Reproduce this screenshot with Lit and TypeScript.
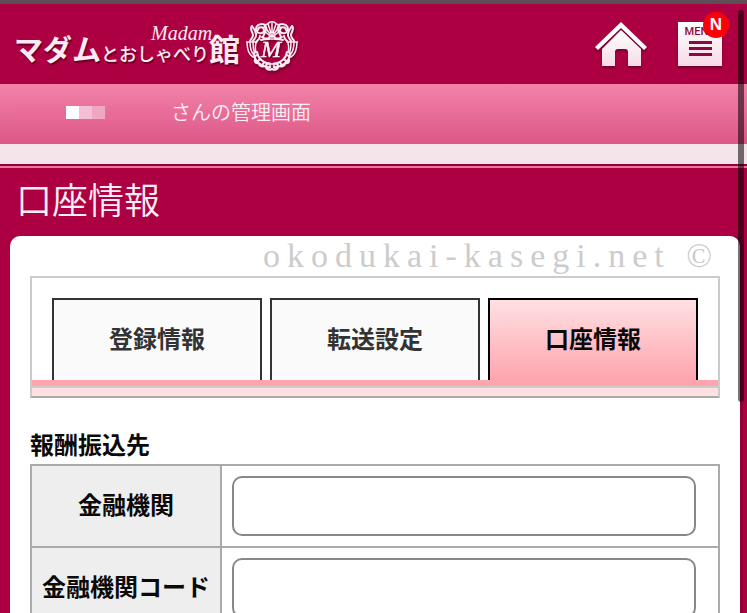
import { LitElement, html, css, svg } from "lit";
import { customElement, state } from "lit/decorators.js";
import { classMap } from "lit/directives/class-map.js";

@customElement("site-emblem")
class SiteEmblem extends LitElement {
  static styles = css`
    :host { display: block; }
    svg { display: block; filter: drop-shadow(1px 2px 1px rgba(60, 0, 20, 0.5)); }
    .letter { font: italic 24px "Liberation Serif", serif; }
  `;

  private half() {
    return svg`
      <path stroke-width="2" d="M12 9a3 3 0 1 1 4 3c-3 1-6-1-6-4s3-5 6-5 5 3 4 6-2 4-3 7"/>
      <path stroke-width="2" d="M6 5c-3 3 1 6 1 9s-2 4-3 6M10 12c1 4-1 5-3 8M14 15c0 3-2 4-4 6M6 5c2 3 4 5 4 8"/>
      <path stroke-width="2" d="M16 16c2 2 4 2 7 1M15 19c3-1 5-1 8-1"/>
      <path d="M1 21c0 7 1 12 6 15M4 21c0 6 1 10 4 13M7 21c0 5 0 8 2 11M10 22c-1 4-1 6 0 9M0 21h11"/>
      <path stroke-width="2" d="M8 32c0 7 6 13 14 14M11 31c1 6 5 10 12 12M9 38c-1 3 1 5 4 4M13 43c0 2 3 3 5 2M11 34l-3 2M14 38l-3 3M18 41l-2 4"/>
      <path stroke-width="2" d="M25 43c-4-2-6 1-4 3s4 0 3-1M20 47c2 3 4 2 6 1"/>`;
  }

  render() {
    return html`<svg width="52" height="52" viewBox="0 0 52 52" aria-hidden="true">
      <g fill="none" stroke="#fdeaf2" stroke-width="1.5" stroke-linecap="round">
        ${this.half()}
        <g transform="translate(52 0) scale(-1 1)">${this.half()}</g>
        <path d="M26 12V2M25 12l-3-9M27 12l3-9M24 13l-5-7M28 13l5-7M23 14l-5-4M29 14l5-4"/>
        <path d="M18 7c0-3 2-4 4-4 1-3 7-3 8 0 2 0 4 1 4 4"/>
        <path fill="#fdeaf2" d="M23 16c1-3 5-3 6 0zM23 18h6"/>
      </g>
      <text class="letter" x="25" y="36" text-anchor="middle" fill="#fff2f7" stroke="#fff2f7" stroke-width="0.5">M</text>
    </svg>`;
  }
}

@customElement("app-root")
class AppRoot extends LitElement {
  static styles = css`
    :host {
      display: block;
      position: relative;
      min-height: 100vh;
      box-sizing: border-box;
      background: #ac0042;
      border-top: 4px solid #5f4d55;
      color: #0a0a0a;
      font-family: "Noto Sans CJK JP", sans-serif;
    }
    * { box-sizing: border-box; }
    header {
      display: flex;
      align-items: center;
      height: 80px;
      padding: 0 25px 0 14px;
    }
    .logo {
      position: relative;
      display: flex;
      align-items: center;
      margin-right: auto;
      padding-top: 6px;
      color: #fdeaf2;
      text-decoration: none;
      white-space: nowrap;
    }
    .name {
      display: flex;
      align-items: baseline;
      line-height: 40px;
      padding-top: 6px;
      font-weight: 700;
      text-shadow: 1px 2px 1px rgba(60, 0, 20, 0.6);
    }
    .big { font-size: 29px; }
    .small { font-size: 18px; font-weight: 500; }
    .hall { font-size: 31px; }
    .script {
      position: absolute;
      left: 137px;
      top: 8px;
      font: italic 20px/20px "Liberation Serif", serif;
    }
    site-emblem { margin-left: 6px; }
    .home { display: block; margin-right: 31px; }
    .home svg { display: block; filter: drop-shadow(0 2px 1px rgba(60, 0, 20, 0.5)); }
    .menu {
      position: relative;
      display: flex;
      flex-direction: column;
      align-items: center;
      width: 44px;
      height: 44px;
      margin: 0;
      padding: 4px 0 0;
      border: 0;
      background: linear-gradient(#fff, #f7dbe7);
      box-shadow: 0 2px 2px rgba(60, 0, 20, 0.5);
      color: #8c0a42;
      font: 500 11px/12px Roboto, sans-serif;
    }
    .lines {
      width: 23px;
      height: 15px;
      margin-top: 3px;
      background: repeating-linear-gradient(#8c0a42 0 3px, transparent 3px 6px);
    }
    .badge {
      position: absolute;
      top: -10px;
      right: -7px;
      width: 26px;
      height: 26px;
      border-radius: 50%;
      background: #fb0007;
      color: #fff;
      font: 700 17px/26px "Liberation Sans", sans-serif;
      text-align: center;
    }
    .user {
      display: flex;
      align-items: center;
      height: 60px;
      padding: 0 14px 4px;
      background: linear-gradient(#f283a9, #dd5687);
      color: #fdeef4;
      font-size: 20px;
      font-weight: 350;
      line-height: 30px;
    }
    .mask { display: flex; width: 157px; padding-left: 52px; background: #e96c9a55; }
    .mask i { width: 13px; height: 13px; }
    .mask i:nth-child(1) { background: #fff; }
    .mask i:nth-child(2) { background: #f4bfd4; }
    .mask i:nth-child(3) { background: #efa7c4; }
    .strip {
      height: 24px;
      background: #f5e4ea;
      border-bottom: 2px solid #e9799f;
      box-shadow: inset 0 -2px #930038;
    }
    h1 {
      margin: 0;
      padding: 3px 16px 11px;
      color: #fdeef4;
      font-size: 36px;
      font-weight: 350;
      line-height: 54px;
    }
    main {
      margin: 0 7px 0 10px;
      padding: 0 20px 20px;
      border-radius: 10px 10px 0 0;
      background: #fff;
      box-shadow: 3px 0 #930038;
    }
    .mark {
      height: 40px;
      margin: 0;
      padding-left: 232px;
      color: #ccc;
      font-family: "Liberation Serif", serif;
      font-size: 34px;
      letter-spacing: 7px;
      line-height: 40px;
      text-align: center;
      white-space: nowrap;
    }
    nav { border: 2px solid #ccc; border-bottom-color: #aaa; }
    .tabs {
      display: grid;
      grid-template-columns: repeat(3, 1fr);
      gap: 8px;
      padding: 20px 20px 0;
      border-bottom: 6px solid #fea5ad;
    }
    .tabs a {
      height: 82px;
      border: 2px solid #333;
      border-bottom: 0;
      background: #fafafa;
      color: #333;
      font-size: 24px;
      font-weight: 700;
      line-height: 76px;
      text-align: center;
      text-decoration: none;
    }
    .tabs a.on {
      border-color: #000;
      background: linear-gradient(#ffe0e3, #fea5ad);
      color: #0a0a0a;
    }
    .base { height: 10px; border-top: 2px solid #ccc; background: #ffe0e3; }
    h2 {
      margin: 28px 0 2px;
      font-size: 24px;
      font-weight: 700;
      line-height: 36px;
    }
    table { width: 100%; border-collapse: collapse; table-layout: fixed; }
    th, td { height: 82px; border: 2px solid #aaa; }
    th {
      width: 190px;
      padding: 0 0 4px;
      background: #eee;
      font-size: 24px;
      font-weight: 700;
      line-height: 36px;
      white-space: nowrap;
    }
    td { padding: 10px 22px 10px 10px; }
    input {
      display: block;
      width: 100%;
      height: 60px;
      padding: 0 12px;
      border: 2px solid #888;
      border-radius: 10px;
      background: #fff;
      font: 24px "Noto Sans CJK JP", sans-serif;
    }
    .thumb {
      position: absolute;
      top: 6px;
      right: 3px;
      width: 6px;
      height: 392px;
      border-radius: 3px;
      background: rgba(0, 0, 0, 0.55);
    }
  `;

  @state() private current = 2;

  private tabs = ["登録情報", "転送設定", "口座情報"];
  private fields = [
    { id: "bank", label: "金融機関" },
    { id: "bank-code", label: "金融機関コード" },
  ];

  private select(e: Event, i: number) {
    e.preventDefault();
    this.current = i;
  }

  render() {
    return html`
      <header>
        <a class="logo" href="#">
          <span class="name">
            <span class="big">マダム</span><span class="small">とおしゃべり</span><span class="hall">館</span>
          </span>
          <span class="script">Madam</span>
          <site-emblem></site-emblem>
        </a>
        <a class="home" href="#" aria-label="ホーム">
          <svg width="52" height="44" viewBox="0 0 52 44">
            <defs>
              <linearGradient id="g" x1="0" y1="0" x2="0" y2="1">
                <stop offset="0" stop-color="#fff" />
                <stop offset="1" stop-color="#f7dbe7" />
              </linearGradient>
            </defs>
            <path d="M26 0 52 25 49 28 26 6 3 28 0 25Z" fill="#fff" />
            <path d="M26 8 46 27V44H33V30q0-3-3-3h-7q-3 0-3 3V44H7V27Z" fill="url(#g)" />
          </svg>
        </a>
        <button class="menu" type="button">
          MENU
          <span class="lines"></span>
          <span class="badge">N</span>
        </button>
      </header>
      <div class="user">
        <span class="mask"><i></i><i></i><i></i></span>さんの管理画面
      </div>
      <div class="strip"></div>
      <h1>口座情報</h1>
      <main>
        <p class="mark">okodukai-kasegi.net ©</p>
        <nav>
          <div class="tabs">
            ${this.tabs.map(
              (t, i) => html`<a
                href="#"
                class=${classMap({ on: i === this.current })}
                @click=${(e: Event) => this.select(e, i)}
              >${t}</a>`
            )}
          </div>
          <div class="base"></div>
        </nav>
        <h2>報酬振込先</h2>
        <table>
          ${this.fields.map(
            (f) => html`<tr>
              <th scope="row"><label for=${f.id}>${f.label}</label></th>
              <td><input id=${f.id} type="text" /></td>
            </tr>`
          )}
        </table>
      </main>
      <div class="thumb"></div>
    `;
  }
}
